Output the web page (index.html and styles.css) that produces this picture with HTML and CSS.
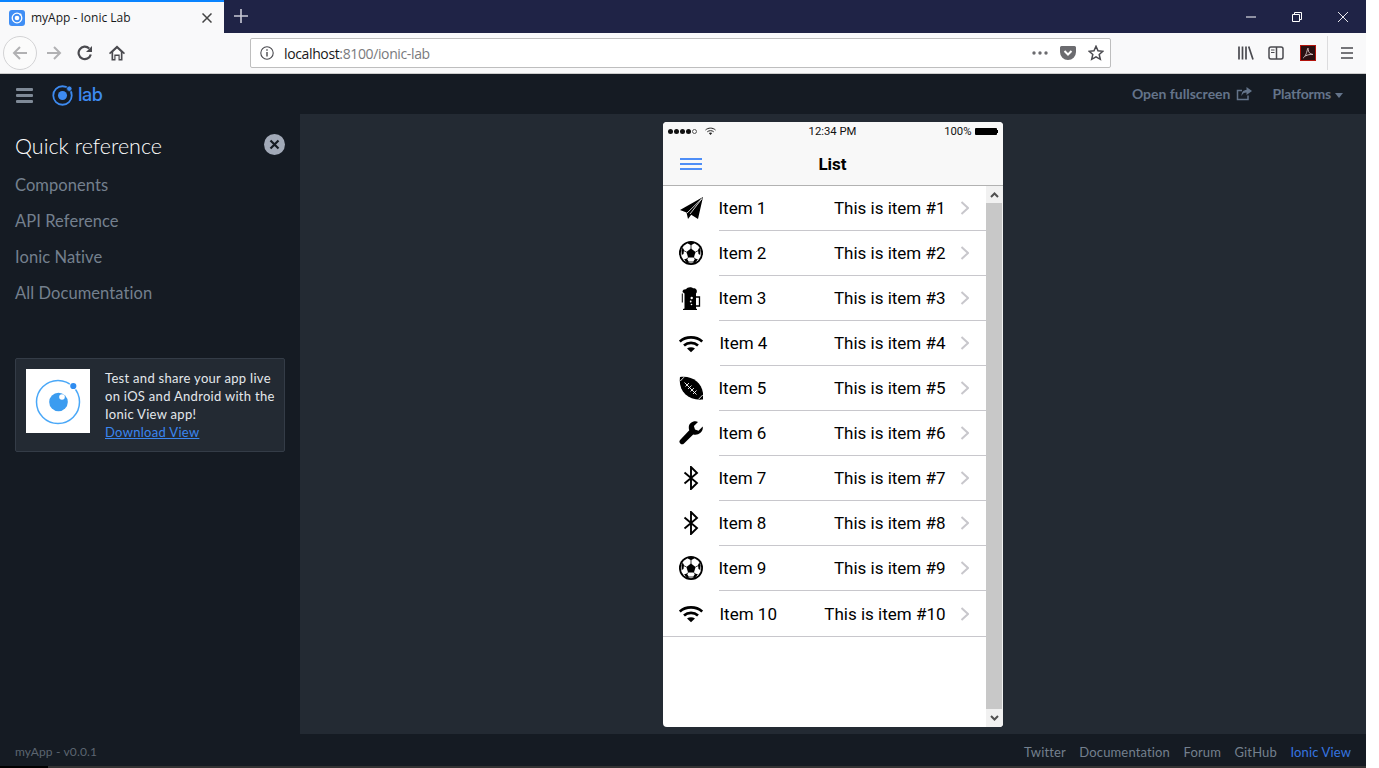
FILE: index.html
```html
<!DOCTYPE html>
<html lang="en">
<head>
<meta charset="utf-8">
<title>myApp - Ionic Lab</title>
<link rel="stylesheet" href="styles.css">
</head>
<body>
<svg class="defs" width="0" height="0" aria-hidden="true">
  <symbol id="i-plane" viewBox="0 0 24 24">
    <path d="M24 1 1 14l6.500 2.600L9 23l3.200-4.200L19 23z" fill="#000"/>
    <path d="M23 2.500 8 17M23 2.500 11 18" stroke="#fff" stroke-width=".8" fill="none"/>
  </symbol>
  <symbol id="i-soccer" viewBox="0 0 24 24">
    <circle cx="12" cy="12" r="12" fill="#000"/>
    <circle cx="12" cy="12" r="10.200" fill="#fff"/>
    <path d="M12 7.600l4.600 3.300-1.700 5.500H9.100l-1.700-5.500z" fill="#000"/>
    <path d="M8.500 2.300 12 4.300l3.500-2L12 .8zM2.500 9l.2 5 1.800-1 .5-4-1.300-2.500zM21.500 9l-.2 5-1.800-1-.5-4 1.300-2.500zM5 18.500l4 4.200 1-1.700-2.200-3.500zM19 18.500l-4 4.200-1-1.700 2.200-3.500z" fill="#000"/>
    <path d="M12 4v4M7.400 10.900 4.500 9.500M16.600 10.900l2.900-1.400M9.100 16.400 8 18M14.900 16.400 16 18M10 21h4" stroke="#000" stroke-width=".8" fill="none"/>
  </symbol>
  <symbol id="i-beer" viewBox="0 0 24 24">
    <path d="M3.500 6C3.500 3.500 5.500 3 7 3.200 8 1 12.500.5 14 2.300c2.500-.5 4.500 1.500 3.700 4.200L17 7.500V22.500l1 .5v1H4v-1l1.500-.5V7.500z" fill="#000"/>
    <path d="M17 11h3.500v9H17" fill="none" stroke="#000" stroke-width="1.300"/>
    <path d="M3.300 7.500v9" fill="none" stroke="#000" stroke-width="1"/>
    <circle cx="12.700" cy="12" r="1.200" fill="#fff"/>
    <circle cx="11.700" cy="15.500" r=".9" fill="#fff"/>
    <circle cx="12.500" cy="18.500" r=".8" fill="#fff"/>
  </symbol>
  <symbol id="i-wifi" viewBox="0 0 24 24">
    <path d="M.8 10.500C6.800 5 17.200 5 23.200 10.500M5 14.500c4-3.500 10-3.500 14 0" fill="none" stroke="#000" stroke-width="2.700"/>
    <path d="M8 17.500c2.400-1.700 5.600-1.700 8 0l-4 3.800z" fill="#000"/>
  </symbol>
  <symbol id="i-football" viewBox="0 0 24 24">
    <path d="M1 1C15-1 26 9 24 23.500 9 25-1 15 1 1z" fill="#000"/>
    <path d="M5.500 6.500 17.500 18.500M6.500 10.500l3.500-3.500M9 13l3.500-3.500M11.500 15.500l3.500-3.500M14 18l3.500-3.500" stroke="#fff" stroke-width=".9" fill="none"/>
    <path d="M5 1.200 1.300 5M23.700 19 19.500 23.300" stroke="#fff" stroke-width=".9"/>
  </symbol>
  <symbol id="i-wrench" viewBox="0 0 24 24">
    <path d="M23.700 5.500 19.500 9.700 16 8.600 14.900 5.100 19 .9C15-.8 9.500 1.700 9.800 7c0 1 .2 1.700.5 2.300L1.300 18.700a2.600 2.600 0 0 0 3.700 3.700l9.200-9C18.500 15 24.800 11.500 23.700 5.500z" fill="#000"/>
  </symbol>
  <symbol id="i-bt" viewBox="0 0 24 24">
    <path d="M5.500 6.500 18 17l-6 6V1l6 6L5.500 17.500" fill="none" stroke="#000" stroke-width="1.900"/>
  </symbol>
  <symbol id="i-chev" viewBox="0 0 9 14">
    <path d="M1.500 1 8 7l-6.500 6" fill="none" stroke="#c8c7cc" stroke-width="2"/>
  </symbol>
</svg>

<div class="window">
  <div class="tabbar">
    <div class="tab">
      <svg class="favicon" viewBox="0 0 16 16"><rect width="16" height="16" rx="3" fill="#3f8ef5"/><circle cx="8" cy="8" r="4.800" fill="none" stroke="#fff" stroke-width="1.300"/><circle cx="8" cy="8" r="2.300" fill="#fff"/><circle cx="11.500" cy="4.500" r="1" fill="#fff"/></svg>
      <span class="tab-title">myApp - Ionic Lab</span>
      <svg class="tab-close" viewBox="0 0 10 10"><path d="M.5.500l9 9M9.500.500l-9 9" stroke="#444" stroke-width="1.500"/></svg>
    </div>
    <svg class="newtab" viewBox="0 0 14 14"><path d="M7 0v14M0 7h14" stroke="#c9cad6" stroke-width="1.600"/></svg>
    <div class="spacer"></div>
    <svg class="win-btn" viewBox="0 0 10 10"><path d="M0 5h10" stroke="#fff" stroke-width="1"/></svg>
    <svg class="win-btn" viewBox="0 0 10 10"><path d="M.5 2.500h7v7h-7zM2.500 2.500v-2h7v7h-2" fill="none" stroke="#fff" stroke-width="1"/></svg>
    <svg class="win-btn" viewBox="0 0 10 10"><path d="M0 0l10 10M10 0 0 10" stroke="#fff" stroke-width=".9"/></svg>
  </div>

  <div class="toolbar">
    <div class="back">
      <svg class="nav-icon" viewBox="0 0 16 16"><path d="M15 8H2M8 2 2 8l6 6" fill="none" stroke="#b1b1b3" stroke-width="2"/></svg>
    </div>
    <svg class="nav-icon forward" viewBox="0 0 16 16"><path d="M1 8h13M8 2l6 6-6 6" fill="none" stroke="#b1b1b3" stroke-width="2"/></svg>
    <svg class="nav-icon reload" viewBox="0 0 16 16"><path d="M13.800 9.500A6.200 6.200 0 1 1 12.200 3.500" fill="none" stroke="#4a4a4f" stroke-width="2.200"/><path d="M15 1v6H9z" fill="#4a4a4f"/></svg>
    <svg class="nav-icon home" viewBox="0 0 16 16"><path d="M8 .5 0 8l1 1.200L2.500 8v7.500h4V11h3v4.500h4V8L15 9.200 16 8z" fill="#4a4a4f"/><path d="M8 3.500 4.200 7v7h1.100V9.500h5.400V14h1.100V7z" fill="#fff"/></svg>
    <div class="urlbar">
      <svg class="info" viewBox="0 0 14 14"><circle cx="7" cy="7" r="6.200" fill="none" stroke="#4a4a4f" stroke-width="1.100"/><path d="M7 6v4.500M7 3.300v1.400" stroke="#4a4a4f" stroke-width="1.400"/></svg>
      <span class="url"><span class="url-host">localhost</span>:8100/ionic-lab</span>
      <div class="spacer"></div>
      <svg class="dots" viewBox="0 0 16 4"><circle cx="2" cy="2" r="1.700" fill="#6b6b6f"/><circle cx="8" cy="2" r="1.700" fill="#6b6b6f"/><circle cx="14" cy="2" r="1.700" fill="#6b6b6f"/></svg>
      <svg class="pocket" viewBox="0 0 16 16"><path d="M1.500 1h13A1.500 1.500 0 0 1 16 2.500V7A8 8 0 0 1 0 7V2.500A1.500 1.500 0 0 1 1.500 1z" fill="#6b6b6f"/><path d="M4.500 6 8 9.500 11.500 6" fill="none" stroke="#fff" stroke-width="2"/></svg>
      <svg class="star" viewBox="0 0 16 16"><path d="M8 1.300l2 4.500 4.900.5-3.700 3.200 1.100 4.800L8 11.800l-4.300 2.500 1.100-4.800L1.100 6.300 6 5.800z" fill="none" stroke="#4a4a4f" stroke-width="1.500"/></svg>
    </div>
    <div class="spacer"></div>
    <svg class="tool lib" viewBox="0 0 16 16"><path d="M1 1.500v13M4.500 1.500v13M8 1.500v13M10.700 1.500l4.300 13" stroke="#4a4a4f" stroke-width="1.700" fill="none"/></svg>
    <svg class="tool side" viewBox="0 0 16 16"><rect x="1" y="2" width="14" height="12" rx="2" fill="none" stroke="#4a4a4f" stroke-width="1.500"/><path d="M8.500 2v12" stroke="#4a4a4f" stroke-width="1.500"/><path d="M3 5h3.500M3 7.500h3.500" stroke="#4a4a4f" stroke-width="1.200"/></svg>
    <svg class="tool pdf" viewBox="0 0 16 16"><rect x=".5" y=".5" width="15" height="15" fill="#2a1012" stroke="#b3130c"/><path d="M3 13c2-1 3.500-4 4.500-9 .3-1.500 1-1 .8.500-.2 2.500 1.500 4.500 4.700 5-3-.3-5.500.3-7.500 1.500" fill="none" stroke="#c9b8b8" stroke-width="1"/></svg>
    <div class="tool-sep"></div>
    <svg class="tool burger" viewBox="0 0 12 12"><path d="M0 1h12M0 6h12M0 11h12" stroke="#4a4a4f" stroke-width="1.600"/></svg>
  </div>

  <header class="labbar">
    <div class="lab-burger"><i></i><i></i><i></i></div>
    <svg class="lab-logo" viewBox="0 0 20 20"><circle cx="10" cy="10" r="8.800" fill="none" stroke="#3d8af0" stroke-width="1.700"/><circle cx="10" cy="10" r="4.300" fill="#3d8af0"/><circle cx="16.500" cy="3.500" r="2.600" fill="#3d8af0" stroke="#151b23" stroke-width=".8"/></svg>
    <span class="lab-word">lab</span>
    <div class="spacer"></div>
    <a class="lab-action">Open fullscreen</a>
    <svg class="share" viewBox="0 0 16 14"><path d="M12 8.500V12.500H1.500V3.500H6" fill="none" stroke="#64748a" stroke-width="1.500"/><path d="M10.500 0 16 4l-5.500 4V5.500C8 5.500 6.500 6.500 5.500 9c0-4 2-6 5-6z" fill="#64748a"/></svg>
    <a class="lab-action platforms">Platforms</a>
    <span class="caret"></span>
  </header>

  <div class="middle">
    <aside class="sidebar">
      <div class="side-head">
        <h2 class="side-title">Quick reference</h2>
        <svg class="side-close" viewBox="0 0 21 21"><circle cx="10.500" cy="10.500" r="10.500" fill="#a2aab8"/><path d="M6.500 6.500l8 8M14.500 6.500l-8 8" stroke="#151b23" stroke-width="2.200"/></svg>
      </div>
      <nav class="side-nav">
        <a>Components</a>
        <a>API Reference</a>
        <a>Ionic Native</a>
        <a>All Documentation</a>
      </nav>
      <div class="view-card">
        <svg class="view-img" viewBox="0 0 64 64"><rect width="64" height="64" fill="#fff"/><circle cx="32" cy="33" r="21.500" fill="none" stroke="#4aa8f8" stroke-width="1.500"/><circle cx="32.500" cy="33" r="9.300" fill="#3b9cf0"/><circle cx="36" cy="28" r="2.800" fill="#fff"/><circle cx="47.300" cy="17" r="4" fill="#fff"/><circle cx="47.300" cy="17" r="3.100" fill="#2f8cf0"/></svg>
        <div class="view-text">
          Test and share your app live on iOS and Android with the Ionic View app!
          <a class="view-link">Download View</a>
        </div>
      </div>
    </aside>

    <main class="stage">
      <div class="device">
        <div class="status">
          <span class="signal"><i></i><i></i><i></i><i></i><i class="off"></i></span>
          <svg class="st-wifi" viewBox="0 0 11 8"><path d="M.5 3C3.200.500 7.800.500 10.500 3M2.300 4.800c1.700-1.500 4.700-1.500 6.400 0" fill="none" stroke="#222" stroke-width="1"/><path d="M3.800 6c1-.7 2.400-.7 3.400 0L5.500 8z" fill="#222"/></svg>
          <span class="st-time">12:34 PM</span>
          <span class="st-batt">100%</span>
          <span class="battery"></span>
        </div>
        <div class="navbar">
          <div class="nav-burger"><i></i><i></i><i></i></div>
          <div class="nav-title">List</div>
        </div>
        <div class="content">
          <div class="list">
            <div class="row"><svg class="ico"><use href="#i-plane"/></svg><div class="row-in"><span class="lbl">Item 1</span><span class="note">This is item #1</span><svg class="chev"><use href="#i-chev"/></svg></div></div>
            <div class="row"><svg class="ico"><use href="#i-soccer"/></svg><div class="row-in"><span class="lbl">Item 2</span><span class="note">This is item #2</span><svg class="chev"><use href="#i-chev"/></svg></div></div>
            <div class="row"><svg class="ico"><use href="#i-beer"/></svg><div class="row-in"><span class="lbl">Item 3</span><span class="note">This is item #3</span><svg class="chev"><use href="#i-chev"/></svg></div></div>
            <div class="row"><svg class="ico wide"><use href="#i-wifi"/></svg><div class="row-in"><span class="lbl">Item 4</span><span class="note">This is item #4</span><svg class="chev"><use href="#i-chev"/></svg></div></div>
            <div class="row"><svg class="ico"><use href="#i-football"/></svg><div class="row-in"><span class="lbl">Item 5</span><span class="note">This is item #5</span><svg class="chev"><use href="#i-chev"/></svg></div></div>
            <div class="row"><svg class="ico"><use href="#i-wrench"/></svg><div class="row-in"><span class="lbl">Item 6</span><span class="note">This is item #6</span><svg class="chev"><use href="#i-chev"/></svg></div></div>
            <div class="row"><svg class="ico"><use href="#i-bt"/></svg><div class="row-in"><span class="lbl">Item 7</span><span class="note">This is item #7</span><svg class="chev"><use href="#i-chev"/></svg></div></div>
            <div class="row"><svg class="ico"><use href="#i-bt"/></svg><div class="row-in"><span class="lbl">Item 8</span><span class="note">This is item #8</span><svg class="chev"><use href="#i-chev"/></svg></div></div>
            <div class="row"><svg class="ico"><use href="#i-soccer"/></svg><div class="row-in"><span class="lbl">Item 9</span><span class="note">This is item #9</span><svg class="chev"><use href="#i-chev"/></svg></div></div>
            <div class="row last"><svg class="ico wide"><use href="#i-wifi"/></svg><div class="row-in"><span class="lbl">Item 10</span><span class="note">This is item #10</span><svg class="chev"><use href="#i-chev"/></svg></div></div>
          </div>
          <div class="scrollbar">
            <div class="sb-btn"><svg viewBox="0 0 9 6"><path d="M1 5l3.500-3.500L8 5" fill="none" stroke="#505050" stroke-width="2"/></svg></div>
            <div class="sb-thumb"></div>
            <div class="sb-btn end"><svg viewBox="0 0 9 6"><path d="M1 1l3.500 3.500L8 1" fill="none" stroke="#505050" stroke-width="2"/></svg></div>
          </div>
        </div>
      </div>
    </main>
  </div>

  <footer class="footer">
    <span class="version">myApp - v0.0.1</span>
    <div class="spacer"></div>
    <a>Twitter</a>
    <a>Documentation</a>
    <a>Forum</a>
    <a>GitHub</a>
    <a class="active">Ionic View</a>
  </footer>
  <div class="strip"><i></i></div>
</div>
</body>
</html>
```

FILE: styles.css
```css
* { box-sizing: border-box; }
html, body { margin: 0; padding: 0; background: #fff; }
body { width: 1379px; height: 768px; overflow: hidden; }
.defs { display: block; height: 0; }
.spacer { flex: 1; }
a { cursor: pointer; }

.window { width: 1366px; height: 768px; display: flex; flex-direction: column; font-family: Lato, "Liberation Sans", sans-serif; }

/* browser tabs */
.tabbar { height: 33px; background: #1f2346; display: flex; align-items: center; flex: none; }
.tab { width: 224px; height: 33px; background: #f9f9fa; border-top: 2px solid #0a84ff; display: flex; align-items: center; padding: 0 12px 0 9px; }
.favicon { width: 16px; height: 16px; flex: none; }
.tab-title { margin-left: 6px; font: 12px "Open Sans", sans-serif; color: #18191a; flex: 1; }
.tab-close { width: 10px; height: 10px; flex: none; }
.newtab { width: 14px; height: 14px; margin-left: 10px; margin-top: -2px; }
.win-btn { width: 10px; height: 10px; margin-right: 36px; }
.win-btn:last-child { margin-right: 18px; }

/* browser toolbar */
.toolbar { height: 41px; background: #f9f9fa; border-bottom: 1px solid #ccc; display: flex; align-items: center; flex: none; padding-left: 3px; }
.back { width: 34px; height: 34px; border: 1px solid #d3d3d5; border-radius: 50%; display: flex; align-items: center; justify-content: center; background: #fbfbfb; }
.nav-icon { width: 16px; height: 16px; flex: none; }
.forward { margin-left: 9px; }
.reload { margin-left: 15px; }
.home { margin-left: 16px; }
.urlbar { width: 861px; height: 30px; margin-left: 125px; background: #fff; border: 1px solid #bebebe; border-radius: 2px; display: flex; align-items: center; padding: 0 6px 0 9px; }
.info { width: 14px; height: 14px; }
.url { margin-left: 10px; font: 14px "Open Sans", sans-serif; color: #7a7a7d; letter-spacing: -.37px; }
.url-host { color: #18191a; }
.dots { width: 16px; height: 4px; }
.pocket { width: 16px; height: 16px; margin-left: 12px; }
.star { width: 16px; height: 16px; margin-left: 12px; }
.tool { width: 16px; height: 16px; flex: none; margin-right: 15px; }
.tool.side { margin-left: -1px; margin-right: 16px; }
.tool-sep { width: 1px; height: 34px; background: #dcdcde; margin-right: 13px; margin-left: -4px; }
.tool.burger { width: 12px; height: 12px; margin-right: 13px; }

/* lab header */
.labbar { height: 40px; background: #151b23; display: flex; align-items: center; flex: none; padding: 0 23px 0 16px; }
.lab-burger { width: 17px; display: flex; flex-direction: column; gap: 3px; margin-top: 2px; }
.lab-burger i { display: block; height: 3px; background: #7f8a97; border-radius: 1px; }
.lab-logo { width: 21px; height: 21px; margin-left: 19px; margin-top: 2px; }
.lab-word { margin-left: 5px; margin-top: 1px; font: 500 18px Inter, sans-serif; color: #3d8af0; letter-spacing: -.5px; }
.lab-action { font: bold 14px "Lato", sans-serif; color: #64748a; margin-top: -1px; }
.share { width: 16px; height: 14px; margin-left: 6px; }
.platforms { margin-left: 20px; letter-spacing: -.2px; }
.caret { width: 0; height: 0; border: 4.500px solid transparent; border-top: 5px solid #64748a; border-bottom: 0; margin-left: 4px; margin-top: 2px; }

/* middle */
.middle { height: 620px; display: flex; flex: none; }
.sidebar { width: 300px; background: #151b23; padding: 0 15px; flex: none; }
.side-head { display: flex; justify-content: space-between; padding-top: 20px; height: 53px; }
.side-title { margin: -1px 0 0; font-weight: 300; font-size: 21.500px; line-height: 26px; color: #fff; }
.side-close { width: 21px; height: 21px; }
.side-nav { display: flex; flex-direction: column; }
.side-nav a { height: 36px; line-height: 36px; font-size: 16.500px; color: #74808e; letter-spacing: .08px; }
.view-card { margin-top: 47px; height: 94px; background: #232a33; border: 1px solid #343c47; border-radius: 2px; display: flex; padding: 10px 6px 10px 10px; }
.view-img { width: 64px; height: 64px; flex: none; }
.view-text { margin-left: 15px; font-size: 13px; line-height: 18px; color: #e4e8ec; letter-spacing: .3px; }
.view-link { display: block; color: #3a86f0; text-decoration: underline; }

/* stage */
.stage { flex: 1; background: #232a33; display: flex; justify-content: center; padding-top: 8px; padding-right: 1px; }
.device { width: 340px; height: 605px; background: #fff; border-radius: 4px; overflow: hidden; display: flex; flex-direction: column; font-family: Roboto, sans-serif; }
.status { height: 20px; background: #f8f8f8; display: flex; align-items: center; padding: 0 6px 2px 5px; position: relative; font-size: 11.300px; color: #111; flex: none; }
.signal { display: flex; gap: 1px; }
.signal i { width: 5px; height: 5px; border-radius: 50%; background: #111; }
.signal i.off { background: none; border: 1px solid #555; }
.st-wifi { width: 11px; height: 8px; margin-left: 8px; }
.st-time { position: absolute; left: 0; right: 0; text-align: center; }
.st-batt { margin-left: auto; }
.battery { width: 22px; height: 7px; margin-left: 3px; background: #000; border-radius: 1px; position: relative; }
.battery::after { content: ""; position: absolute; right: -1px; top: 2px; width: 1px; height: 3px; background: #000; }
.navbar { height: 44px; background: #f8f8f8; border-bottom: 1px solid #b2b2b2; position: relative; display: flex; align-items: center; flex: none; padding-left: 17px; }
.nav-burger { width: 22px; display: flex; flex-direction: column; gap: 3px; }
.nav-burger i { height: 2px; background: #4e8ef7; display: block; }
.nav-title { position: absolute; left: 0; right: 0; text-align: center; font-size: 17px; font-weight: 700; color: #000; }
.content { flex: 1; display: flex; min-height: 0; }
.list { width: 323px; flex: none; }
.row { height: 45px; display: flex; align-items: center; padding-left: 16px; }
.row.last { height: 46px; border-bottom: 1px solid #c8c7cc; }
.ico { width: 24px; height: 24px; flex: none; margin-right: 16px; margin-top: -1px; }
.ico.wide { margin-right: 17px; }
.row-in { flex: 1; height: 100%; border-bottom: 1px solid #c8c7cc; display: flex; align-items: center; font-size: 17px; color: #000; min-width: 0; }
.last .row-in { border-bottom: 0; padding-top: 1px; }
.lbl { flex: 1; }
.chev { width: 9px; height: 14px; margin-left: 14px; margin-right: 17px; flex: none; }
.scrollbar { width: 17px; flex: none; display: flex; flex-direction: column; background: #f1f1f1; }
.sb-btn { height: 17px; flex: none; background: #f1f1f1; display: flex; align-items: center; justify-content: center; }
.sb-btn.end { height: 18px; }
.sb-btn svg { width: 9px; height: 6px; }
.sb-thumb { flex: 1; background: #c8c8c8; margin-right: 1px; }

/* footer */
.footer { height: 32px; background: #151b23; display: flex; align-items: center; flex: none; padding: 3px 15px 0; font-size: 13px; letter-spacing: .14px; }
.version { font-size: 12px; color: #5c6570; letter-spacing: .15px; }
.footer a { color: #74808e; margin-left: 13.500px; }
.footer a.active { color: #3575e0; }
.strip { height: 2px; background: #333; flex: none; }
.strip i { display: block; width: 48px; height: 2px; background: #000; }
```
